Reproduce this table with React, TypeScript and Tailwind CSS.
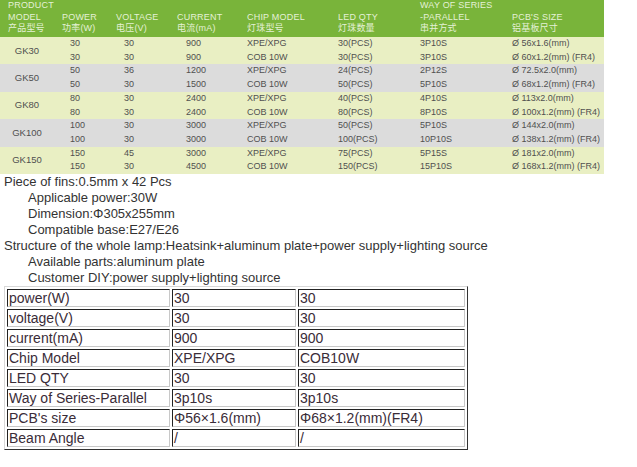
import React from "react";

const cols = "grid grid-cols-[62px_54px_61px_70px_91px_82px_92px_92px]";

const groups = [
  {
    model: "GK30",
    bg: "bg-[#e9efc3]",
    rows: [
      ["30", "30", "900", "XPE/XPG", "30(PCS)", "3P10S", "Ø 56x1.6(mm)"],
      ["30", "30", "900", "COB 10W", "30(PCS)", "3P10S", "Ø 60x1.2(mm) (FR4)"],
    ],
  },
  {
    model: "GK50",
    bg: "bg-[#dcdcdc]",
    rows: [
      ["50", "36", "1200", "XPE/XPG", "24(PCS)", "2P12S", "Ø 72.5x2.0(mm)"],
      ["50", "30", "1500", "COB 10W", "50(PCS)", "5P10S", "Ø 68x1.2(mm) (FR4)"],
    ],
  },
  {
    model: "GK80",
    bg: "bg-[#e9efc3]",
    rows: [
      ["80", "30", "2400", "XPE/XPG", "40(PCS)", "4P10S", "Ø 113x2.0(mm)"],
      ["80", "30", "2400", "COB 10W", "80(PCS)", "8P10S", "Ø 100x1.2(mm) (FR4)"],
    ],
  },
  {
    model: "GK100",
    bg: "bg-[#dcdcdc]",
    rows: [
      ["100", "30", "3000", "XPE/XPG", "50(PCS)", "5P10S", "Ø 144x2.0(mm)"],
      ["100", "30", "3000", "COB 10W", "100(PCS)", "10P10S", "Ø 138x1.2(mm) (FR4)"],
    ],
  },
  {
    model: "GK150",
    bg: "bg-[#e9efc3]",
    rows: [
      ["150", "45", "3000", "XPE/XPG", "75(PCS)", "5P15S", "Ø 181x2.0(mm)"],
      ["150", "30", "4500", "COB 10W", "150(PCS)", "15P10S", "Ø 168x1.2(mm) (FR4)"],
    ],
  },
];

// left padding for each data column (power .. pcb)
const pads = ["pl-[8px]", "pl-[8px]", "pl-[9px]", "pl-0", "pl-0", "pl-0", "pl-0"];

const specs = [
  ["power(W)", "30", "30"],
  ["voltage(V)", "30", "30"],
  ["current(mA)", "900", "900"],
  ["Chip Model", "XPE/XPG", "COB10W"],
  ["LED QTY", "30", "30"],
  ["Way of Series-Parallel", "3p10s", "3p10s"],
  ["PCB's size", "Φ56×1.6(mm)", "Φ68×1.2(mm)(FR4)"],
  ["Beam Angle", "/", "/"],
];

function Head({ lines }: { lines: string[] }) {
  return (
    <div className="flex flex-col justify-end pb-[4px]">
      {lines.map((l) => (
        <div key={l} className="h-[11.5px] leading-[11.5px] whitespace-nowrap">
          {l}
        </div>
      ))}
    </div>
  );
}

export default function App() {
  return (
    <div className="min-h-[467px] bg-white font-['Liberation_Sans','Noto_Sans_CJK_SC',Arial,sans-serif]">
      {/* product chart */}
      <div className="w-[604px] text-[9px]">
        <div className={`${cols} h-[37px] bg-[#79b43a] text-[#e4f1d6] tracking-[0.2px]`}>
          <div className="pl-[8px]">
            <Head lines={["PRODUCT", "MODEL", "产品型号"]} />
          </div>
          <Head lines={["POWER", "功率(W)"]} />
          <Head lines={["VOLTAGE", "电压(V)"]} />
          <Head lines={["CURRENT", "电流(mA)"]} />
          <Head lines={["CHIP MODEL", "灯珠型号"]} />
          <Head lines={["LED QTY", "灯珠数量"]} />
          <Head lines={["WAY OF SERIES", "-PARALLEL", "串并方式"]} />
          <Head lines={["PCB'S SIZE", "铝基板尺寸"]} />
        </div>
        {groups.map((g) => (
          <div key={g.model} className={`${cols} grid-rows-[13.7px_13.7px] ${g.bg} text-[#505050]`}>
            <div className="col-start-1 row-start-1 row-span-2 flex items-center justify-center w-[54px] text-[9.5px]">
              {g.model}
            </div>
            {g.rows.map((r, i) =>
              r.map((v, j) => (
                <div
                  key={`${i}-${j}`}
                  className={`${pads[j]} flex items-center whitespace-nowrap`}
                  style={{ gridRow: i + 1, gridColumn: j + 2 }}
                >
                  {v}
                </div>
              ))
            )}
          </div>
        ))}
      </div>

      {/* description */}
      <div className="pl-[4px] text-[13px] leading-[16px] text-[#333]">
        <p>Piece of fins:0.5mm x 42 Pcs</p>
        <p className="pl-[24px]">Applicable power:30W</p>
        <p className="pl-[24px]">Dimension:Φ305x255mm</p>
        <p className="pl-[24px]">Compatible base:E27/E26</p>
        <p>Structure of the whole lamp:Heatsink+aluminum plate+power supply+lighting source</p>
        <p className="pl-[24px]">Available parts:aluminum plate</p>
        <p className="pl-[24px]">Customer DIY:power supply+lighting source</p>
      </div>

      {/* spec table */}
      <div className="pl-[4px]">
        <table className="w-[464px] border-separate border-spacing-[2px] border border-t-[#d8d8d8] border-l-[#d8d8d8] border-r-[#333] border-b-[#333] text-[14px] text-[#3a2c38]">
          <tbody>
            {specs.map((row) => (
              <tr key={row[0]}>
                {row.map((c, k) => (
                  <td
                    key={k}
                    className={`${k === 0 ? "w-[163px]" : k === 1 ? "w-[124px]" : ""} h-[18px] p-0 pl-[1px] leading-[16px] whitespace-nowrap border border-t-[#222] border-l-[#222] border-r-[#c8c8c8] border-b-[#c8c8c8]`}
                  >
                    {c}
                  </td>
                ))}
              </tr>
            ))}
          </tbody>
        </table>
      </div>
    </div>
  );
}
